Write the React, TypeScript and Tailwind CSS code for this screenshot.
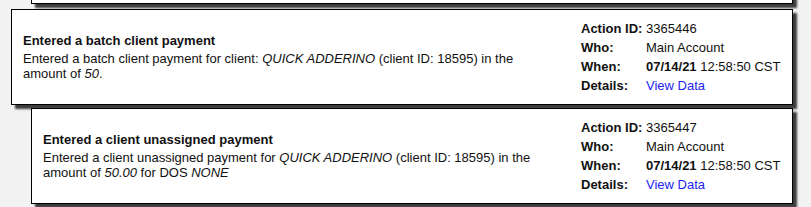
import React from 'react';

interface LogEntry {
  id: string;
  title: string;
  description: React.ReactNode;
  who: string;
  date: string;
  time: string;
  nested?: boolean;
}

const entries: LogEntry[] = [
  {
    id: '3365446',
    title: 'Entered a batch client payment',
    description: (
      <>
        Entered a batch client payment for client: <i>QUICK ADDERINO</i> (client ID: 18595) in the amount of <i>50</i>.
      </>
    ),
    who: 'Main Account',
    date: '07/14/21',
    time: '12:58:50 CST',
  },
  {
    id: '3365447',
    title: 'Entered a client unassigned payment',
    description: (
      <>
        Entered a client unassigned payment for <i>QUICK ADDERINO</i> (client ID: 18595) in the amount of <i>50.00</i> for DOS <i>NONE</i>
      </>
    ),
    who: 'Main Account',
    date: '07/14/21',
    time: '12:58:50 CST',
    nested: true,
  },
];

const LogCard = ({ entry }: { entry: LogEntry }) => (
  <div
    className={`flex border border-black bg-white py-[9px] shadow-[4px_4px_2px_#3c3c3c] ${
      entry.nested ? 'ml-[20px]' : ''
    }`}
  >
    {/* Summary */}
    <div className="flex flex-1 flex-col justify-center pl-[11px] pr-[30px]">
      <div className="mb-[3px] font-bold leading-[15px]">{entry.title}</div>
      <div className="leading-[15px]">{entry.description}</div>
    </div>

    {/* Meta */}
    <div className="w-[211px] shrink-0 pr-[11px]">
      <div className="flex h-[19px] items-center">
        <span className="w-[65px] font-bold">Action ID:</span>
        <span>{entry.id}</span>
      </div>
      <div className="flex h-[19px] items-center">
        <span className="w-[65px] font-bold">Who:</span>
        <span>{entry.who}</span>
      </div>
      <div className="flex h-[19px] items-center">
        <span className="w-[65px] font-bold">When:</span>
        <span>
          <b>{entry.date}</b> {entry.time}
        </span>
      </div>
      <div className="flex h-[19px] items-center">
        <span className="w-[65px] font-bold">Details:</span>
        <a href="#" className="text-[#2323ee]">View Data</a>
      </div>
    </div>
  </div>
);

export default function App() {
  return (
    <div
      className="min-h-screen overflow-hidden bg-[#f2f2f2] pl-[11px] pr-[18px] text-[13px] text-[#111]"
      style={{ fontFamily: '"Liberation Sans", Arial, sans-serif' }}
    >
      {/* tail of the previous entry, scrolled off the top */}
      <div className="ml-[20px] mb-[5px] mt-[-92px] h-[96px] border border-black bg-white shadow-[4px_4px_2px_#3c3c3c]" />

      <div className="flex flex-col gap-[3px]">
        {entries.map((entry) => (
          <LogCard key={entry.id} entry={entry} />
        ))}
      </div>
    </div>
  );
}
